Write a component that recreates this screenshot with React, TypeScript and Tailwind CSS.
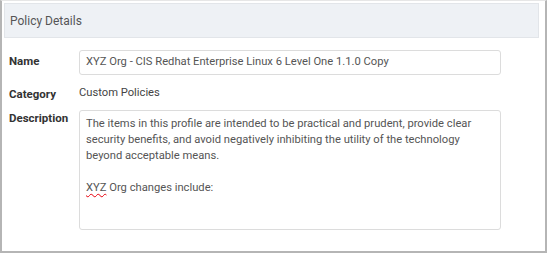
const Field = ({ label, children, top = "pt-0" }: { label: string; children: React.ReactNode; top?: string }) => (
  <div className="flex">
    <div className={`w-[70px] shrink-0 text-[11.5px] font-bold text-[#333] ${top}`}>{label}</div>
    <div className="flex-1">{children}</div>
  </div>
)

export default function App() {
  return (
    <div
      className="w-[547px] h-[253px] bg-white border-x-2 border-b-2 border-t border-[#b5b5b5] border-t-[#e6e6e6] pt-[2px] px-[2px]"
      style={{ fontFamily: "Roboto, 'Noto Sans', sans-serif" }}
    >
      <div className="h-[35px] bg-[#eef1f5] border border-[#e2e5e9] flex items-center pl-[5px] mr-[4px]">
        <span className="text-[12px] text-[#555]">Policy Details</span>
      </div>
      <div className="pl-[5px] pr-[42px] pt-[12px] flex flex-col">
        <Field label="Name" top="pt-[3px]">
          <div className="h-[25px] border border-[#dcdcdc] rounded-[3px] flex items-center px-[6px] text-[11.2px] text-[#555]">
            XYZ Org - CIS Redhat Enterprise Linux 6 Level One 1.1.0 Copy
          </div>
        </Field>
        <div className="mt-[11px]">
          <Field label="Category">
            <div className="text-[11.2px] text-[#444] leading-[14px]">Custom Policies</div>
          </Field>
        </div>
        <div className="mt-[7px]">
          <Field label="Description" top="pt-[0px]">
            <div className="h-[120px] border border-[#dcdcdc] rounded-[3px] pl-[6px] pr-[18px] pt-[5px] text-[11.2px] leading-[16px] text-[#555]">
              <p>
                The items in this profile are intended to be practical and prudent, provide clear security benefits, and avoid negatively inhibiting the utility of the technology beyond acceptable means.
              </p>
              <p className="mt-[16px]">
                <span className="underline decoration-wavy decoration-red-600 decoration-[1px] underline-offset-2">XYZ</span> Org changes include:
              </p>
            </div>
          </Field>
        </div>
      </div>
    </div>
  )
}
